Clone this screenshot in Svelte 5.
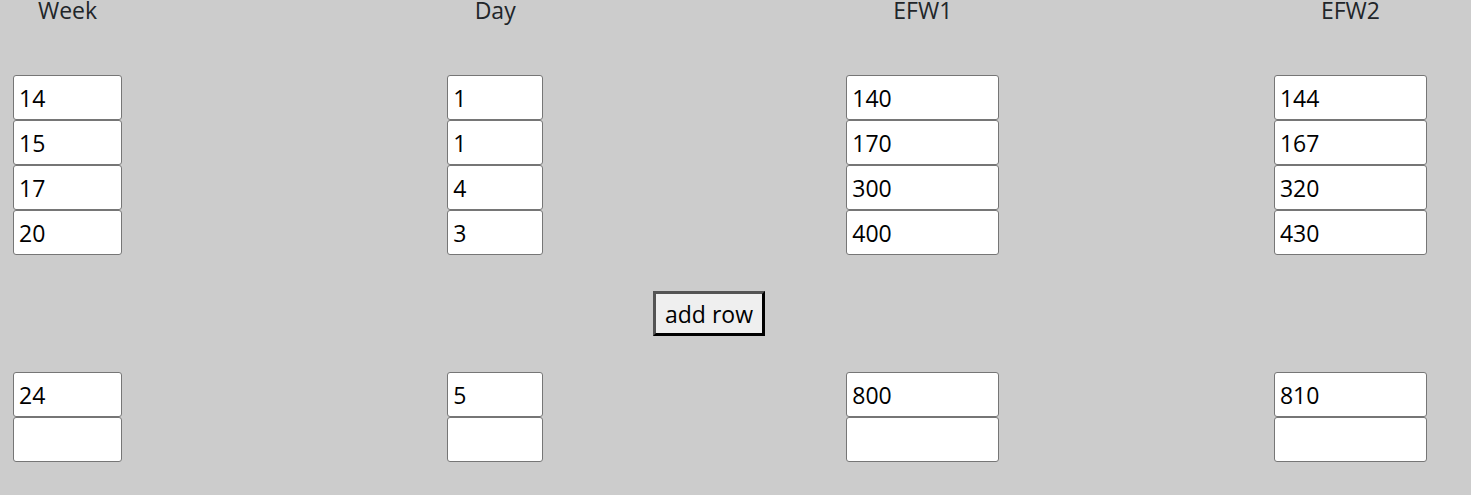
<script>
  const columns = [
    { key: 'week', label: 'Week' },
    { key: 'day', label: 'Day' },
    { key: 'efw1', label: 'EFW1' },
    { key: 'efw2', label: 'EFW2' }
  ];
  let rows = $state([
    { week: '14', day: '1', efw1: '140', efw2: '144' },
    { week: '15', day: '1', efw1: '170', efw2: '167' },
    { week: '17', day: '4', efw1: '300', efw2: '320' },
    { week: '20', day: '3', efw1: '400', efw2: '430' }
  ]);
  let extra = $state([
    { week: '24', day: '5', efw1: '800', efw2: '810' },
    { week: '', day: '', efw1: '', efw2: '' }
  ]);
  function addRow() {
    extra.push({ week: '', day: '', efw1: '', efw2: '' });
  }
</script>

{#snippet fields(list)}
  <div class="rows">
    {#each list as row}
      <div class="row">
        {#each columns as col}
          <input class={col.key} type="text" aria-label={col.label} bind:value={row[col.key]} />
        {/each}
      </div>
    {/each}
  </div>
{/snippet}

<main>
  <div class="row head">
    {#each columns as col}
      <span>{col.label}</span>
    {/each}
  </div>
  {@render fields(rows)}
  <button type="button" onclick={addRow}>add row</button>
  {@render fields(extra)}
</main>

<style>
  :global(body) {
    background: #ccc;
  }
  main {
    display: flex;
    flex-direction: column;
    gap: 36px;
    padding: 0 66px 32px 13px;
    font-family: "Segoe UI", "Open Sans", "Noto Sans", sans-serif;
    font-size: 23px;
    line-height: 36px;
    color: #212529;
  }
  /* Wider fields stay centred on their column and may overhang it. */
  .row {
    display: grid;
    grid-template-columns: repeat(4, 109px);
    justify-content: space-between;
    justify-items: center;
  }
  .head {
    height: 39px;
    line-height: 20px;
  }
  input,
  button {
    box-sizing: border-box;
    height: 45px;
    margin: 0;
    font: inherit;
    color: #000;
  }
  input {
    padding: 0 5px;
    border: 1px solid #767676;
    border-radius: 3px;
    background: #fff;
  }
  .week {
    width: 109px;
  }
  .day {
    width: 96px;
  }
  .efw1,
  .efw2 {
    width: 153px;
  }
  button {
    align-self: center;
    padding: 0 9px;
    border: 3px outset #000;
    background: #efefef;
  }
</style>
